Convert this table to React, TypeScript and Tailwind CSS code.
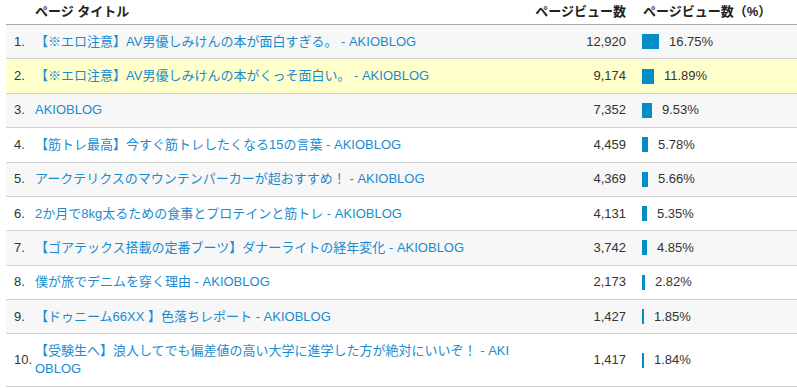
const rows = [
  { title: "【※エロ注意】AV男優しみけんの本が面白すぎる。 - AKIOBLOG", views: "12,920", pct: 16.75 },
  { title: "【※エロ注意】AV男優しみけんの本がくっそ面白い。 - AKIOBLOG", views: "9,174", pct: 11.89 },
  { title: "AKIOBLOG", views: "7,352", pct: 9.53 },
  { title: "【筋トレ最高】今すぐ筋トレしたくなる15の言葉 - AKIOBLOG", views: "4,459", pct: 5.78 },
  { title: "アークテリクスのマウンテンパーカーが超おすすめ！ - AKIOBLOG", views: "4,369", pct: 5.66 },
  { title: "2か月で8kg太るための食事とプロテインと筋トレ - AKIOBLOG", views: "4,131", pct: 5.35 },
  { title: "【ゴアテックス搭載の定番ブーツ】ダナーライトの経年変化 - AKIOBLOG", views: "3,742", pct: 4.85 },
  { title: "僕が旅でデニムを穿く理由 - AKIOBLOG", views: "2,173", pct: 2.82 },
  { title: "【ドゥニーム66XX 】色落ちレポート - AKIOBLOG", views: "1,427", pct: 1.85 },
  { title: "【受験生へ】浪人してでも偏差値の高い大学に進学した方が絶対にいいぞ！ - AKIOBLOG", views: "1,417", pct: 1.84 },
];

const rowBg = (i: number) => {
  if (i === 1) return "bg-[#ffffcc]";
  return i % 2 === 0 ? "bg-[#f7f7f7]" : "bg-white";
};

export default function App() {
  return (
    <div className="w-[797px] h-[388px] bg-white overflow-hidden font-['Liberation_Sans','Noto_Sans_CJK_JP',sans-serif] text-[13px] text-[#333]">
      <table className="ml-[6px] w-[791px] table-fixed">
        <colgroup>
          <col className="w-[29px]" />
          <col className="w-[475px]" />
          <col className="w-[132px]" />
          <col />
        </colgroup>
        <thead>
          <tr className="border-b border-[#a8a8a8]">
            <th></th>
            <th className="text-left font-bold text-[#222] py-[3px] leading-[18px]">ページ タイトル</th>
            <th className="text-right font-bold text-[#222] pr-[16px] leading-[18px]">ページビュー数</th>
            <th className="text-left font-bold text-[#222] pl-[1px] leading-[18px]">ページビュー数（%）</th>
          </tr>
        </thead>
        <tbody>
          {rows.map((r, i) => (
            <tr key={i} className={`border-b border-[#d2d2d2] ${rowBg(i)}`}>
              <td className="pl-[8px] py-[7.7px] leading-[18px] align-middle">{i + 1}.</td>
              <td className="py-[7.7px] leading-[18px] text-[#1a8bcf] break-all align-middle">{r.title}</td>
              <td className="text-right pr-[16px] leading-[18px] align-middle">{r.views}</td>
              <td className="align-middle">
                <div className="flex items-center gap-[10px]">
                  <div
                    className="h-[15px] bg-[#058dc7]"
                    style={{ width: Math.max(2, Math.round(r.pct)) }}
                  />
                  <span className="leading-[18px]">{r.pct.toFixed(2)}%</span>
                </div>
              </td>
            </tr>
          ))}
        </tbody>
      </table>
    </div>
  );
}
